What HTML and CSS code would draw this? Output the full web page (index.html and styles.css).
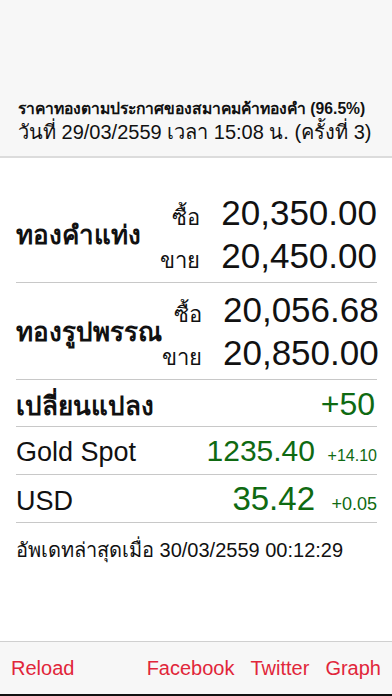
FILE: index.html
```html
<!DOCTYPE html>
<html lang="th">
<head>
<meta charset="utf-8">
<link rel="stylesheet" href="styles.css">
</head>
<body>
<div class="app">
  <header class="head">
    <div class="title">ราคาทองตามประกาศของสมาคมค้าทองคำ (96.5%)</div>
    <div class="date">วันที่ 29/03/2559 เวลา 15:08 น. (ครั้งที่ 3)</div>
  </header>
  <main class="main">
    <section class="gold first">
      <div class="gname">ทองคำแท่ง</div>
      <div class="prices">
        <div class="pline"><span class="plabel">ซื้อ</span><span class="pval">20,350.00</span></div>
        <div class="pline"><span class="plabel">ขาย</span><span class="pval">20,450.00</span></div>
      </div>
    </section>
    <section class="gold">
      <div class="gname">ทองรูปพรรณ</div>
      <div class="prices">
        <div class="pline"><span class="plabel">ซื้อ</span><span class="pval">20,056.68</span></div>
        <div class="pline"><span class="plabel">ขาย</span><span class="pval">20,850.00</span></div>
      </div>
    </section>
    <div class="row change">
      <span class="rname bold">เปลี่ยนแปลง</span>
      <span class="rval big">+50</span>
    </div>
    <div class="row">
      <span class="rname">Gold Spot</span>
      <span class="rval">1235.40</span>
      <span class="rdelta">+14.10</span>
    </div>
    <div class="row">
      <span class="rname">USD</span>
      <span class="rval usd">35.42</span>
      <span class="rdelta wide">+0.05</span>
    </div>
    <div class="updated">อัพเดทล่าสุดเมื่อ 30/03/2559 00:12:29</div>
  </main>
  <footer class="foot">
    <span class="btn">Reload</span>
    <span class="spacer"></span>
    <span class="btn">Facebook</span>
    <span class="btn">Twitter</span>
    <span class="btn">Graph</span>
  </footer>
</div>
</body>
</html>
```

FILE: styles.css
```css
html, body {
  margin: 0;
  padding: 0;
  background: #ffffff;
}
body {
  font-family: "Liberation Sans", Arial, sans-serif;
  color: #111111;
}
.app {
  width: 392px;
  height: 696px;
  display: flex;
  flex-direction: column;
  overflow: hidden;
}
.head {
  height: 158px;
  box-sizing: border-box;
  background: #f7f7f7;
  border-bottom: 2px solid #dcdcdc;
  display: flex;
  flex-direction: column;
  justify-content: flex-end;
  padding: 0 16px 11px 18px;
}
.title {
  font-size: 15.7px;
  font-weight: bold;
  line-height: 20px;
  white-space: nowrap;
}
.date {
  font-size: 20px;
  line-height: 26px;
  white-space: nowrap;
}
.main {
  flex: 1;
  padding: 0 15px 0 16px;
}
.gold {
  display: flex;
  align-items: center;
  border-bottom: 1px solid #c8c8c8;
  padding: 5px 0 5px;
}
.gold.first {
  padding-top: 33px;
}
.gname {
  flex: 1;
  font-size: 26px;
  font-weight: bold;
  white-space: nowrap;
}
.prices {
  display: flex;
  flex-direction: column;
}
.pline {
  height: 43px;
  display: flex;
  align-items: baseline;
  justify-content: flex-end;
  gap: 21px;
}
.plabel {
  font-size: 22px;
}
.pval {
  font-size: 35px;
  line-height: 43px;
}
.row {
  height: 48px;
  display: flex;
  align-items: baseline;
  border-bottom: 1px solid #c8c8c8;
  box-sizing: border-box;
  padding-top: 4px;
}
.row.change {
  height: 47px;
}
.rname {
  flex: 1;
  font-size: 27px;
  line-height: 40px;
}
.rname.bold {
  font-size: 26px;
  font-weight: bold;
}
.rval {
  color: #0f6a12;
  font-size: 30px;
  line-height: 40px;
}
.rval.big {
  font-size: 32px;
  margin-right: 2px;
}
.rval.usd {
  font-size: 33px;
}
.rdelta {
  color: #0f6a12;
  font-size: 16px;
  width: 51px;
  text-align: right;
  margin-left: 11px;
  white-space: nowrap;
}
.rdelta.wide {
  font-size: 18px;
}
.updated {
  font-size: 20px;
  padding-top: 11px;
  white-space: nowrap;
}
.foot {
  height: 55px;
  box-sizing: border-box;
  background: #f7f7f7;
  border-top: 1px solid #d0d0d0;
  border-bottom: 2px solid #111111;
  display: flex;
  align-items: center;
  padding: 0 11px 0 11px;
  gap: 16px;
}
.spacer {
  flex: 1;
}
.btn {
  color: #e1263a;
  font-size: 20px;
}
```
